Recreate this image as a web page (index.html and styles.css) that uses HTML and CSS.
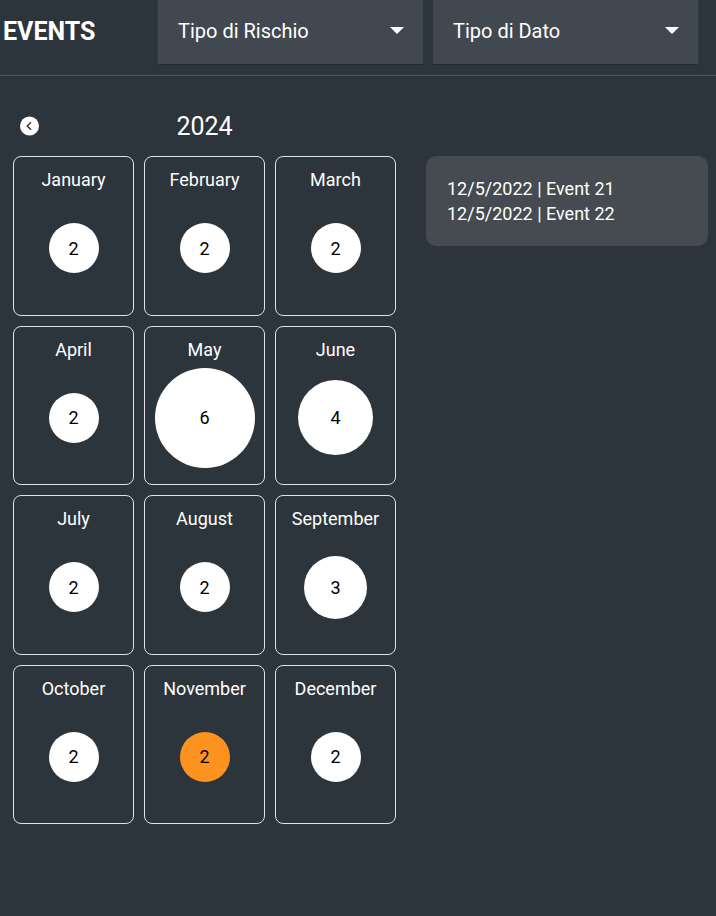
FILE: index.html
```html
<!DOCTYPE html>
<html lang="en">
<head>
    <meta charset="UTF-8">
    <meta name="viewport" content="width=device-width, initial-scale=1">
    <title>Events</title>
    <link rel="stylesheet" href="styles.css">
</head>
<body>

<header class="topbar">
    <h1>EVENTS</h1>
    <div class="filters">
        <div class="filter">
            <select id="risk" name="risk" aria-label="Tipo di Rischio">
                <option>Tipo di Rischio</option>
            </select>
            <svg class="arrow" viewBox="0 0 14 7" aria-hidden="true"><path d="M0 0h14L7 7z"/></svg>
        </div>
        <div class="filter">
            <select id="data" name="data" aria-label="Tipo di Dato">
                <option>Tipo di Dato</option>
            </select>
            <svg class="arrow" viewBox="0 0 14 7" aria-hidden="true"><path d="M0 0h14L7 7z"/></svg>
        </div>
    </div>
</header>

<main class="content">
    <section class="calendar">
        <div class="year-nav">
            <button type="button" class="prev" aria-label="Previous year">
                <svg viewBox="0 0 20 20" aria-hidden="true">
                    <circle cx="10.5" cy="10" r="9.5"/>
                    <path d="M12 6.2L8.2 10l3.8 3.8"/>
                </svg>
            </button>
            <h2>2024</h2>
        </div>
        <div class="months">
            <div class="month"><h3>January</h3><div class="slot"><button type="button" class="count">2</button></div></div>
            <div class="month"><h3>February</h3><div class="slot"><button type="button" class="count">2</button></div></div>
            <div class="month"><h3>March</h3><div class="slot"><button type="button" class="count">2</button></div></div>
            <div class="month"><h3>April</h3><div class="slot"><button type="button" class="count">2</button></div></div>
            <div class="month"><h3>May</h3><div class="slot"><button type="button" class="count count-xl">6</button></div></div>
            <div class="month"><h3>June</h3><div class="slot"><button type="button" class="count count-lg">4</button></div></div>
            <div class="month"><h3>July</h3><div class="slot"><button type="button" class="count">2</button></div></div>
            <div class="month"><h3>August</h3><div class="slot"><button type="button" class="count">2</button></div></div>
            <div class="month"><h3>September</h3><div class="slot"><button type="button" class="count count-md">3</button></div></div>
            <div class="month"><h3>October</h3><div class="slot"><button type="button" class="count">2</button></div></div>
            <div class="month"><h3>November</h3><div class="slot"><button type="button" class="count active">2</button></div></div>
            <div class="month"><h3>December</h3><div class="slot"><button type="button" class="count">2</button></div></div>
        </div>
    </section>

    <ul class="events">
        <li>12/5/2022 | Event 21</li>
        <li>12/5/2022 | Event 22</li>
    </ul>
</main>

</body>
</html>
```
FILE: styles.css
```css
* {
    box-sizing: border-box;
}
body {
    margin: 0;
    background: #2d353c;
    color: white;
    font-family: Roboto, sans-serif;
    font-size: 18px;
}
h1, h2, h3 {
    margin: 0;
}
button, select {
    font-family: inherit;
    border: none;
    cursor: pointer;
}

/* top bar */
.topbar {
    display: flex;
    padding: 0 18px 10px 3px;
    border-bottom: 1px solid #555759;
}
.topbar h1 {
    width: 155px;
    font-size: 25px;
    line-height: 64px;
}
.filters {
    flex: 1;
    display: grid;
    grid-template-columns: 1fr 1fr;
    gap: 10px;
}
.filter {
    position: relative;
}
.filter select {
    display: block;
    width: 100%;
    height: 65px;
    padding: 0 40px 2px 20px;
    appearance: none;
    background: #42484f;
    border-bottom: 1px solid #24292e;
    border-radius: 0;
    color: white;
    font-size: 20px;
}
.arrow {
    position: absolute;
    top: 27px;
    right: 19px;
    width: 14px;
    height: 7px;
    fill: white;
    pointer-events: none;
}

/* calendar */
.content {
    display: grid;
    grid-template-columns: 383fr 282fr;
    gap: 30px;
    align-items: start;
    padding: 30px 8px 30px 13px;
}
.year-nav {
    display: grid;
    grid-template-columns: 1fr auto 1fr;
    align-items: center;
    height: 40px;
    margin-bottom: 10px;
}
.year-nav h2 {
    font-size: 25px;
    font-weight: normal;
}
.prev {
    display: flex;
    justify-self: start;
    margin-left: 6px;
    padding: 0;
    background: none;
}
.prev svg {
    width: 20px;
    height: 20px;
    fill: white;
}
.prev path {
    fill: none;
    stroke: #2d353c;
    stroke-width: 1.4;
}
.months {
    display: grid;
    grid-template-columns: repeat(3, 1fr);
    grid-auto-rows: 1fr;
    gap: 10px;
    min-height: 668px;
}
.month {
    display: flex;
    flex-direction: column;
    padding: 11px 0 10px;
    border: 1px solid #dee2e6;
    border-radius: 8px;
}
.month h3 {
    font-size: 18px;
    font-weight: normal;
    line-height: 24px;
    text-align: center;
}
.slot {
    flex: 1;
    display: flex;
    align-items: center;
    justify-content: center;
}
.count {
    width: 50px;
    height: 50px;
    padding: 0;
    border-radius: 50%;
    background: white;
    color: black;
    font-size: 18px;
}
.count-md {
    width: 63px;
    height: 63px;
}
.count-lg {
    width: 75px;
    height: 75px;
}
.count-xl {
    width: 100px;
    height: 100px;
}
.active {
    background: #fd931e;
}

/* event list */
.events {
    margin: 50px 0 0;
    padding: 20px 21px;
    list-style: none;
    background: #454b50;
    border-radius: 10px;
    line-height: 25px;
}
```
